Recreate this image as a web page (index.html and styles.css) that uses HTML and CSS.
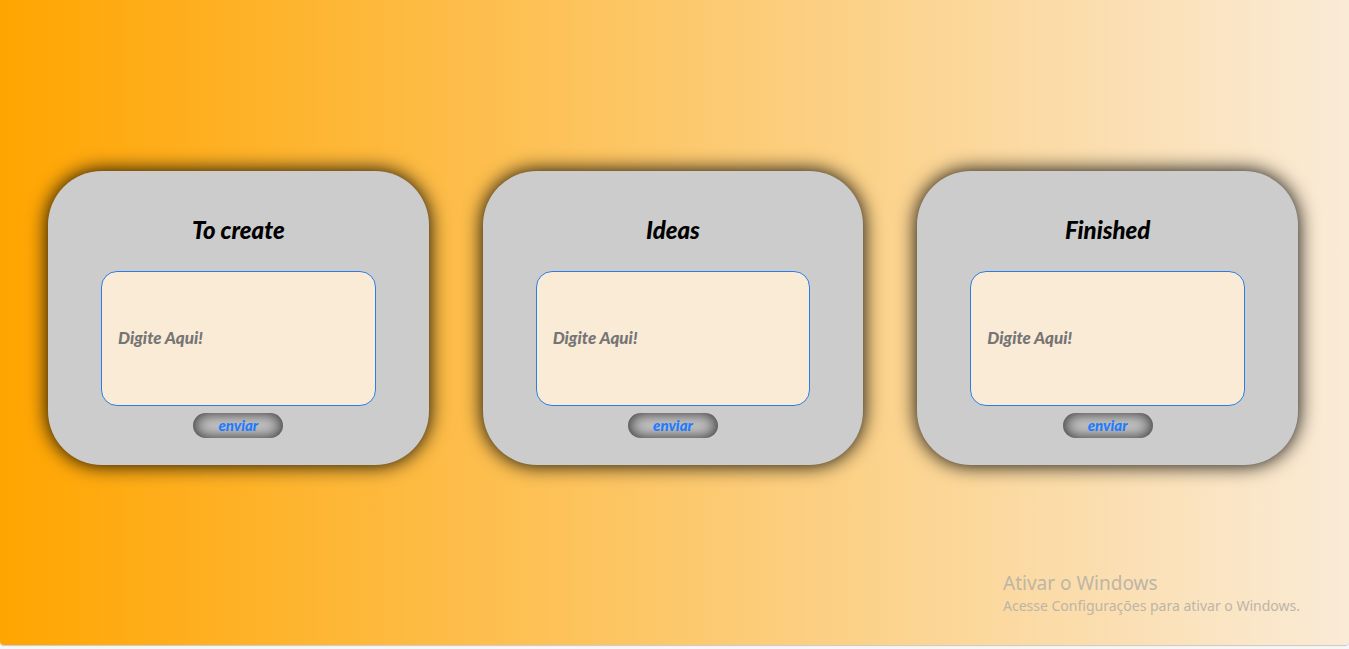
FILE: index.html
```html
<!DOCTYPE html>
<html lang="pt-BR">
<head>
<meta charset="utf-8">
<title>Board</title>
<link rel="stylesheet" href="styles.css">
</head>
<body>
<main class="board">
  <form class="card">
    <h2 class="card-title"><label for="create">To create</label></h2>
    <input class="card-input" id="create" type="text" placeholder="Digite Aqui!">
    <button class="card-button" type="button">enviar</button>
  </form>
  <form class="card">
    <h2 class="card-title"><label for="ideas">Ideas</label></h2>
    <input class="card-input" id="ideas" type="text" placeholder="Digite Aqui!">
    <button class="card-button" type="button">enviar</button>
  </form>
  <form class="card">
    <h2 class="card-title"><label for="finished">Finished</label></h2>
    <input class="card-input" id="finished" type="text" placeholder="Digite Aqui!">
    <button class="card-button" type="button">enviar</button>
  </form>
</main>
<aside class="watermark">
  <p class="watermark-title">Ativar o Windows</p>
  <p class="watermark-text">Acesse Configurações para ativar o Windows.</p>
</aside>
</body>
</html>
```
FILE: styles.css
```css
* {
  box-sizing: border-box;
}

body {
  margin: 0;
  height: 100vh;
  padding-bottom: 4px;
  background: #f7f7f7;
  font-family: Lato, "Open Sans", sans-serif;
}

.board {
  height: 100%;
  display: grid;
  grid-template-columns: repeat(3, 1fr);
  align-content: center;
  gap: 54px;
  padding: 0 51px 9px 48px;
  border-radius: 0 0 4px 4px;
  background: linear-gradient(to right, orange, antiquewhite);
  box-shadow: 0 1px 1px #c8c8c8;
}

.card {
  display: flex;
  flex-direction: column;
  align-items: center;
  padding: 44px 53px 27px;
  border-radius: 54px;
  background: #ccc;
  box-shadow: 0 0 20px #000;
}

.card-title {
  margin: 0 0 26px;
  font-size: 24px;
  line-height: 30px;
  font-weight: 900;
  font-style: italic;
}

.card-input {
  width: 100%;
  height: 135px;
  padding: 0 16px 2px;
  border: 1px solid #2a7de9;
  border-radius: 16px;
  background: antiquewhite;
  font: italic 900 17px Lato, sans-serif;
}

.card-input::placeholder {
  color: #757575;
}

.card-button {
  width: 90px;
  height: 25px;
  margin-top: 7px;
  padding: 0 0 2px;
  border: 0;
  border-radius: 13px;
  background: #ccc;
  box-shadow: inset 0 0 16px rgba(0, 0, 0, 0.85);
  color: #1e7bff;
  font: italic 900 15px Lato, sans-serif;
}

.watermark {
  position: absolute;
  right: 49px;
  bottom: 33px;
  color: #bdb5a7;
  font-family: "Noto Sans", sans-serif;
}

.watermark p {
  margin: 0;
}

.watermark-title {
  font-size: 19px;
  line-height: 24px;
}

.watermark-text {
  font-size: 14px;
  line-height: 21px;
}
```
